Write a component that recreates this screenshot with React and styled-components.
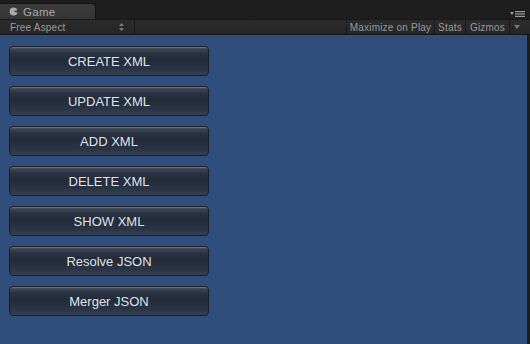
import React from "react";
import styled, { createGlobalStyle } from "styled-components";

const Global = createGlobalStyle`
  html, body { margin: 0; padding: 0; background: #1c1c1c; }
  #root { width: 530px; height: 344px; }
`;

const Window = styled.div`
  width: 530px;
  height: 344px;
  display: flex;
  flex-direction: column;
  background: #1c1c1c;
  font-family: "Liberation Sans", Arial, sans-serif;
  overflow: hidden;
`;

const TabStrip = styled.div`
  height: 19px;
  display: flex;
  align-items: flex-end;
  position: relative;
  background: #1e1e1e;
`;

const Tab = styled.div`
  width: 96px;
  height: 16px;
  box-sizing: border-box;
  background: linear-gradient(#3c3c3c, #353535);
  border: 1px solid #141414;
  border-bottom: none;
  border-left: none;
  border-radius: 0 4px 0 0;
  display: flex;
  align-items: center;
  gap: 5px;
  padding-left: 9px;
  color: #a9a9a9;
  font-size: 11.5px;
  letter-spacing: 0.3px;
`;

const MenuIcon = styled.div`
  position: absolute;
  right: 5px;
  top: 11px;
  display: flex;
  align-items: center;
`;

const Toolbar = styled.div`
  height: 16px;
  box-sizing: border-box;
  display: flex;
  align-items: center;
  background: linear-gradient(#2b2b2b, #262626);
  border-top: 1px solid #1a1a1a;
  border-bottom: 1px solid #141414;
  font-size: 10px;
  color: #9a9a9a;
  letter-spacing: 0.2px;
`;

const ToolItem = styled.div`
  height: 100%;
  display: flex;
  align-items: center;
  padding: 0 ${(p) => p.$pad ?? 5}px;
  width: ${(p) => (p.$w ? p.$w + "px" : "auto")};
  flex: ${(p) => (p.$grow ? 1 : "none")};
  justify-content: ${(p) => (p.$center ? "center" : "space-between")};
  border-right: ${(p) => (p.$last ? "none" : "1px solid #1a1a1a")};
  box-sizing: border-box;
  white-space: nowrap;
`;

const Body = styled.div`
  flex: 1;
  display: flex;
`;

const Viewport = styled.div`
  flex: 1;
  background: #304e7b;
  display: flex;
  flex-direction: column;
  gap: 10px;
  padding: 11px 0 0 9px;
`;

const Edge = styled.div`
  width: 3px;
  background: #1c1c1c;
`;

const Button = styled.button`
  width: 200px;
  height: 30px;
  box-sizing: border-box;
  border: 1px solid #181d26;
  border-radius: 4px;
  background: linear-gradient(
    #5a6474 0px,
    #3d4656 2px,
    #2b3343 6px,
    #232a38 13px,
    #2b3445 22px,
    #36404f 28px
  );
  color: #dfe3ea;
  font-family: "Liberation Sans", Arial, sans-serif;
  font-size: 13px;
  padding: 0;
  box-shadow: inset 0 1px 0 rgba(255, 255, 255, 0.12);
`;

const labels = [
  "CREATE XML",
  "UPDATE XML",
  "ADD XML",
  "DELETE XML",
  "SHOW XML",
  "Resolve JSON",
  "Merger JSON",
];

export default function App() {
  return (
    <>
      <Global />
      <Window>
        <TabStrip>
          <Tab>
            <svg width="9" height="9" viewBox="0 0 10 10">
              <path d="M5 0.5 A4.5 4.5 0 1 0 9.5 6.2 L5 5 L9.5 3.4 A4.5 4.5 0 0 0 5 0.5 Z" fill="#a9a9a9" />
            </svg>
            <span>Game</span>
          </Tab>
          <MenuIcon>
            <svg width="15" height="6" viewBox="0 0 15 6">
              <path d="M0 1 L4 1 L2 4 Z" fill="#9a9a9a" />
              <rect x="5" y="0" width="10" height="1.2" fill="#9a9a9a" />
              <rect x="5" y="2.4" width="10" height="1.2" fill="#9a9a9a" />
              <rect x="5" y="4.8" width="10" height="1.2" fill="#9a9a9a" />
            </svg>
          </MenuIcon>
        </TabStrip>
        <Toolbar>
          <ToolItem $w={135} $pad={10}>
            <span>Free Aspect</span>
            <svg width="5" height="8" viewBox="0 0 5 8">
              <path d="M0 3 L2.5 0 L5 3 Z M0 5 L2.5 8 L5 5 Z" fill="#7a7a7a" />
            </svg>
          </ToolItem>
          <ToolItem $grow />
          <ToolItem $w={88} $center $pad={0}>Maximize on Play</ToolItem>
          <ToolItem $w={31} $center $pad={0}>Stats</ToolItem>
          <ToolItem $w={44} $center $pad={0}>Gizmos</ToolItem>
          <ToolItem $w={20} $pad={4} $last>
            <svg width="6" height="4" viewBox="0 0 6 4">
              <path d="M0 0 L6 0 L3 4 Z" fill="#7a7a7a" />
            </svg>
          </ToolItem>
        </Toolbar>
        <Body>
          <Viewport>
            {labels.map((l) => (
              <Button key={l}>{l}</Button>
            ))}
          </Viewport>
          <Edge />
        </Body>
      </Window>
    </>
  );
}
